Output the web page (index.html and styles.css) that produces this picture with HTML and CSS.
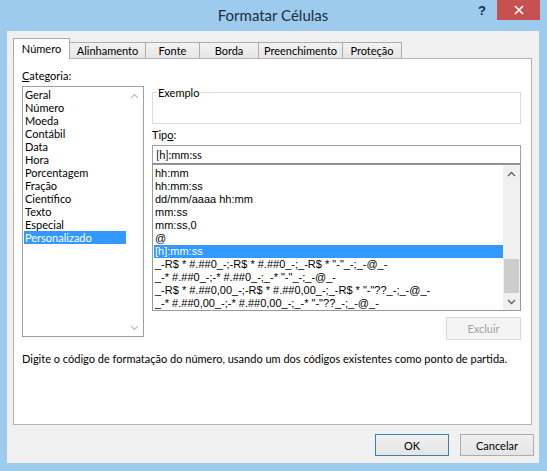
FILE: index.html
```html
<!DOCTYPE html>
<html lang="pt-BR">
<head>
<meta charset="utf-8">
<title>Formatar Células</title>
<link rel="stylesheet" href="styles.css">
</head>
<body>
<div class="window">
  <div class="titlebar">
    <div class="title">Formatar Células</div>
    <div class="controls">
      <span class="help">?</span>
      <span class="close"><svg width="10" height="10" viewBox="0 0 10 10"><path d="M1 1L9 9M9 1L1 9" stroke="#fff" stroke-width="1.7" fill="none"/></svg></span>
    </div>
  </div>
  <div class="client">
    <div class="tabs">
      <div class="tab tab-active t-numero">Número</div>
      <div class="tab t-alin">Alinhamento</div>
      <div class="tab t-fonte">Fonte</div>
      <div class="tab t-borda">Borda</div>
      <div class="tab t-preen">Preenchimento</div>
      <div class="tab t-prot">Proteção</div>
    </div>
    <div class="panel">
      <div class="main">
        <div class="cat-col">
          <div class="label"><u>C</u>ategoria:</div>
          <div class="listbox">
            <div class="items">
              <div class="item">Geral</div>
              <div class="item">Número</div>
              <div class="item">Moeda</div>
              <div class="item">Contábil</div>
              <div class="item">Data</div>
              <div class="item">Hora</div>
              <div class="item">Porcentagem</div>
              <div class="item">Fração</div>
              <div class="item">Científico</div>
              <div class="item">Texto</div>
              <div class="item">Especial</div>
              <div class="item item-sel">Personalizado</div>
            </div>
            <div class="vscroll vscroll-disabled">
              <div class="arrow"><svg width="9" height="6" viewBox="0 0 9 6"><path d="M1 5L4.5 1.5L8 5" stroke="#c4c4c4" stroke-width="1.4" fill="none"/></svg></div>
              <div class="track"></div>
              <div class="arrow"><svg width="9" height="6" viewBox="0 0 9 6"><path d="M1 1L4.5 4.5L8 1" stroke="#c4c4c4" stroke-width="1.4" fill="none"/></svg></div>
            </div>
          </div>
        </div>
        <div class="right-col">
          <fieldset class="group">
            <legend>Exemplo</legend>
          </fieldset>
          <div class="label label-tipo">Tip<u>o</u>:</div>
          <div class="input">[h]:mm:ss</div>
          <div class="typelist">
            <div class="items items-code">
              <div class="item">hh:mm</div>
              <div class="item">hh:mm:ss</div>
              <div class="item">dd/mm/aaaa hh:mm</div>
              <div class="item">mm:ss</div>
              <div class="item">mm:ss,0</div>
              <div class="item">@</div>
              <div class="item item-sel">[h]:mm:ss</div>
              <div class="item">_-R$ * #.##0_-;-R$ * #.##0_-;_-R$ * "-"_-;_-@_-</div>
              <div class="item">_-* #.##0_-;-* #.##0_-;_-* "-"_-;_-@_-</div>
              <div class="item">_-R$ * #.##0,00_-;-R$ * #.##0,00_-;_-R$ * "-"??_-;_-@_-</div>
              <div class="item">_-* #.##0,00_-;-* #.##0,00_-;_-* "-"??_-;_-@_-</div>
            </div>
            <div class="vscroll">
              <div class="arrow"><svg width="9" height="6" viewBox="0 0 9 6"><path d="M1 5L4.5 1.5L8 5" stroke="#606060" stroke-width="1.4" fill="none"/></svg></div>
              <div class="track track-filled"><div class="thumb"></div></div>
              <div class="arrow"><svg width="9" height="6" viewBox="0 0 9 6"><path d="M1 1L4.5 4.5L8 1" stroke="#606060" stroke-width="1.4" fill="none"/></svg></div>
            </div>
          </div>
          <button class="btn btn-disabled excluir">Excluir</button>
        </div>
      </div>
      <p class="desc">Digite o código de formatação do número, usando um dos códigos existentes como ponto de partida.</p>
    </div>
    <div class="buttons">
      <button class="btn btn-default">OK</button>
      <button class="btn">Cancelar</button>
    </div>
  </div>
</div>
</body>
</html>
```
FILE: styles.css
```css
* { box-sizing: border-box; }

body {
  margin: 0;
  font-family: Lato, "Open Sans", sans-serif;
  font-size: 11px;
  color: #000;
}

.window {
  width: 547px;
  height: 471px;
  background: #9ccbee;
  padding: 0 8px 8px 7px;
  display: flex;
  flex-direction: column;
}

.titlebar {
  height: 31px;
  flex: none;
  display: grid;
  grid-template-columns: 1fr auto 1fr;
  align-items: start;
}

.title {
  grid-column: 2;
  font-size: 15px;
  line-height: 30px;
  color: #1f2d3d;
}

.controls {
  grid-column: 3;
  justify-self: end;
  display: flex;
  align-items: flex-start;
}

.help {
  font: bold 13px "Liberation Sans", sans-serif;
  color: #1b2a44;
  line-height: 16px;
  margin-top: 3px;
  margin-right: 11px;
}

.close {
  width: 43px;
  height: 20px;
  margin-right: -1px;
  background: #c75050;
  display: flex;
  align-items: center;
  justify-content: center;
}

.client {
  flex: 1;
  background: #f0f0f0;
  padding: 7px 7px 0 6px;
  display: flex;
  flex-direction: column;
}

.tabs {
  height: 20px;
  display: flex;
  align-items: flex-end;
}

.tab {
  height: 16px;
  border: 1px solid #acacac;
  border-bottom: none;
  background: linear-gradient(#f2f2f2, #e6e6e6);
  margin-left: -1px;
  display: flex;
  align-items: center;
  justify-content: center;
  line-height: 14px;
  padding-top: 1px;
}

.tab-active {
  height: 21px;
  margin-bottom: -1px;
  margin-left: 0;
  background: #fff;
  position: relative;
  z-index: 1;
  padding-top: 0;
}

.t-numero { width: 57px; }
.t-alin { width: 77px; }
.t-fonte { width: 55px; }
.t-borda { width: 60px; }
.t-preen { width: 85px; }
.t-prot { width: 60px; }

.panel {
  height: 367px;
  flex: none;
  background: #fff;
  border: 1px solid #b4b4b4;
  padding: 10px 9px 0 8px;
}

.main {
  display: flex;
  gap: 8px;
  align-items: flex-start;
}

.cat-col {
  width: 122px;
  display: flex;
  flex-direction: column;
}

.label {
  line-height: 14px;
  height: 14px;
}

.listbox {
  margin-top: 3px;
  height: 251px;
  border: 1px solid #a0a0a0;
  display: flex;
  overflow: hidden;
}

.items {
  flex: 1;
  padding-top: 1px;
  overflow: hidden;
}

.item {
  height: 13px;
  line-height: 13px;
  margin-left: 1px;
  padding-left: 1px;
  white-space: nowrap;
}

.item-sel {
  background: #3399ff;
  color: #fff;
}

.vscroll {
  width: 17px;
  flex: none;
  display: flex;
  flex-direction: column;
}

.arrow {
  height: 17px;
  display: flex;
  align-items: center;
  justify-content: center;
}

.track {
  flex: 1;
  display: flex;
  flex-direction: column;
  justify-content: flex-end;
}

.vscroll-disabled .arrow { background: #fff; }

.track-filled { background: #f0f0f0; }

.vscroll:not(.vscroll-disabled) { background: #f0f0f0; }

.thumb {
  height: 34px;
  margin: 0 1px;
  background: #cdcdcd;
}

.right-col {
  width: 369px;
  margin-top: 17px;
  display: flex;
  flex-direction: column;
}

.group {
  margin: 0;
  padding: 0;
  min-width: 0;
  height: 38px;
  border: 1px solid #dcdcdc;
}

.group legend {
  margin-left: 4px;
  padding: 0 1px;
  line-height: 13px;
  font-size: 11px;
}

.label-tipo {
  margin-top: 4px;
}

.input {
  margin-top: 3px;
  height: 19px;
  border: 1px solid #a0a0a0;
  border-bottom-color: #8a8a8a;
  padding-left: 3px;
  line-height: 17px;
}

.typelist {
  height: 147px;
  border: 1px solid #9a9a9a;
  display: flex;
  overflow: hidden;
}

.items-code {
  padding-top: 2px;
  font-family: "Liberation Sans", Arial, sans-serif;
  font-size: 11px;
}

.btn {
  font-family: Lato, "Open Sans", sans-serif;
  font-size: 11px;
  color: #000;
  width: 74px;
  height: 22px;
  border: 1px solid #acacac;
  background: linear-gradient(#f0f0f0, #e5e5e5);
  padding: 0;
}

.btn-default {
  border-color: #3c7fb1;
}

.btn-disabled {
  color: #a3a3a3;
  background: #f4f4f4;
  border-color: #dadada;
}

.excluir {
  align-self: flex-end;
  width: 75px;
  height: 23px;
  margin-top: 6px;
}

.desc {
  margin: 12px 0 0;
  line-height: 14px;
  white-space: nowrap;
}

.buttons {
  margin-top: 9px;
  margin-right: -2px;
  display: flex;
  justify-content: flex-end;
  gap: 11px;
}
```
